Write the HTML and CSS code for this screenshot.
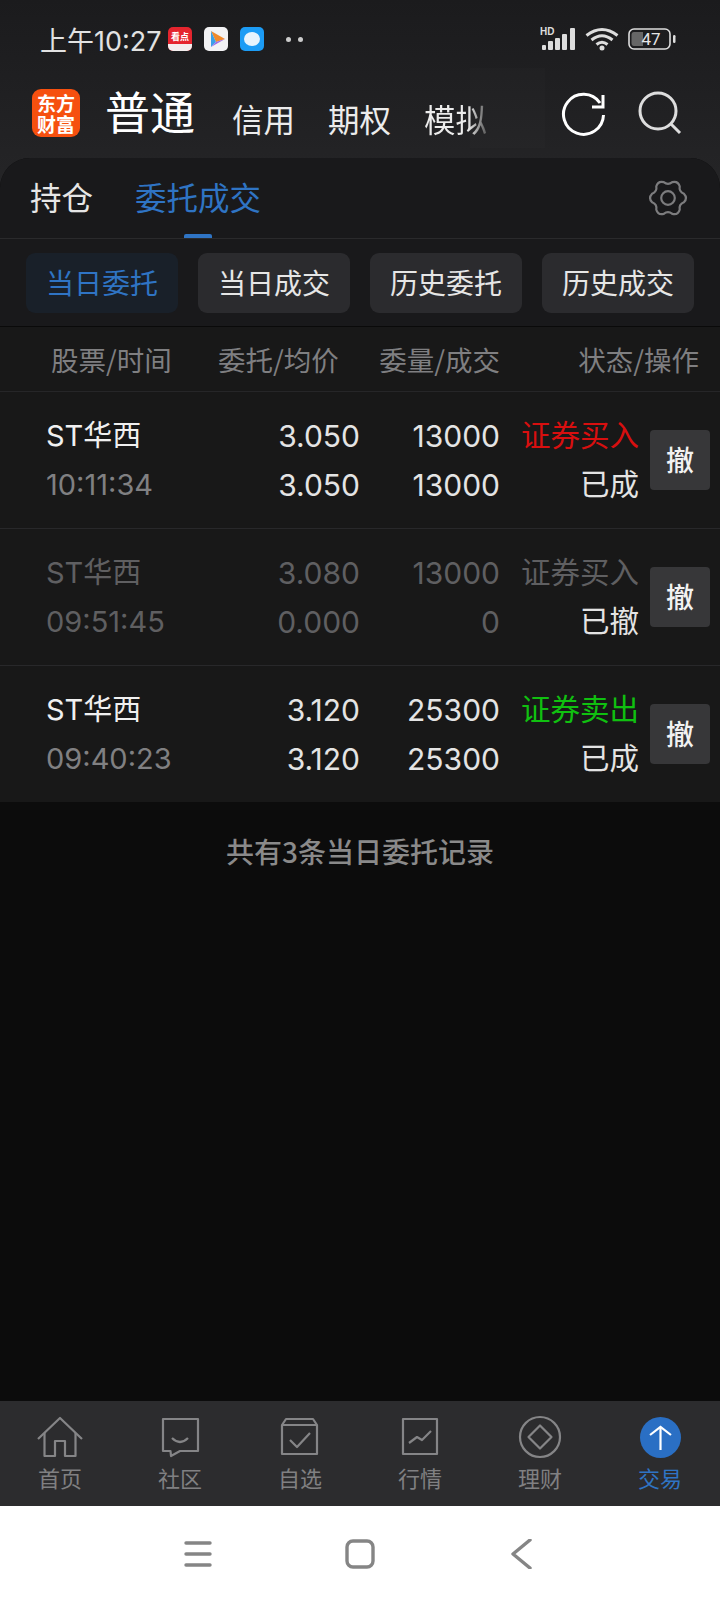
FILE: index.html
```html
<!DOCTYPE html>
<html lang="zh-CN">

<head>
    <meta charset="UTF-8">
    <meta name="viewport" content="width=device-width, initial-scale=1.0">
    <title>委托成交</title>
    <link rel="stylesheet" href="styles.css">
</head>

<body>
    <div class="top">
        <!-- 状态栏 -->
        <div class="status">
            <span class="clock">上午10:27</span>
            <span class="app app-red">看点<i></i></span>
            <span class="app app-white">
                <svg width="24" height="24" viewBox="0 0 24 24">
                    <path d="M7 4 L21 12 L12 15Z" fill="#f08a2c" />
                    <path d="M7 4 L7 20 L12 15Z" fill="#3aa0e8" />
                    <path d="M7 20 L21 12 L12 15Z" fill="#9a6be8" />
                </svg>
            </span>
            <span class="app app-blue"><i></i></span>
            <span class="dots"><i></i><i></i></span>
            <span class="status-right">
                <svg width="36" height="24" viewBox="0 0 36 24">
                    <text x="0" y="8" class="hd">HD</text>
                    <rect x="2" y="18" width="4" height="5" rx="1" fill="#ddd" />
                    <rect x="8" y="14" width="5" height="9" rx="1" fill="#ddd" />
                    <rect x="15" y="11" width="5" height="12" rx="1" fill="#ddd" />
                    <rect x="22" y="7" width="5" height="16" rx="1" fill="#ddd" />
                    <rect x="30" y="1" width="5" height="22" rx="1" fill="#ddd" />
                </svg>
                <svg width="34" height="24" viewBox="0 0 34 24" fill="none" stroke="#ddd" stroke-width="3">
                    <path d="M1.5 8.5 Q17 -3.5 32.5 8.5" />
                    <path d="M6.5 13 Q17 4.5 27.5 13" />
                    <path d="M11.5 17.5 Q17 13 22.5 17.5" />
                    <circle cx="17" cy="21" r="2.5" fill="#ddd" stroke="none" />
                </svg>
                <svg width="48" height="24" viewBox="0 0 48 24">
                    <rect x="1" y="2" width="41" height="20" rx="5" fill="none" stroke="#ddd" stroke-width="1.6" />
                    <path d="M6 5 H15 V19 H6 Q3.5 19 3.5 16 V8 Q3.5 5 6 5Z" fill="#666" />
                    <rect x="45" y="8" width="2.5" height="8" rx="1.2" fill="#ddd" />
                    <text x="23" y="18" class="batt">47</text>
                </svg>
            </span>
        </div>

        <!-- 账户类型 -->
        <div class="head">
            <div class="logo">
                <div>东方</div>
                <div>财富</div>
            </div>
            <span class="acc-main">普通</span>
            <span class="acc">信用</span>
            <span class="acc acc-2">期权</span>
            <span class="acc acc-3 acc-fade">模拟</span>
            <svg class="head-refresh" width="48" height="48" viewBox="0 0 48 48" fill="none" stroke="#fff" stroke-width="3">
                <path d="M40 15 A20 20 0 1 0 43.5 27" />
                <path d="M32 19 H43 V7" />
            </svg>
            <svg class="head-search" width="48" height="48" viewBox="0 0 48 48" fill="none" stroke="#ddd" stroke-width="3">
                <circle cx="21" cy="21" r="18" />
                <path d="M34 34 L43 43" />
            </svg>
        </div>
    </div>

    <div class="panel">
        <div class="tabs">
            <span class="tab">持仓</span>
            <span class="tab tab-on">委托成交</span>
            <svg class="gear" width="44" height="44" viewBox="-22 -22 44 44" fill="none" stroke="#7c7c7e" stroke-width="2.2">
                <path d="M15.9 -4.3 Q20 0 15.9 4.3 Q10.8 6.25 11.7 11.7 Q10 17.3 4.3 15.9 Q0 12.5 -4.3 15.9 Q-10 17.3 -11.7 11.7 Q-10.8 6.25 -15.9 4.3 Q-20 0 -15.9 -4.3 Q-10.8 -6.25 -11.7 -11.7 Q-10 -17.3 -4.3 -15.9 Q0 -12.5 4.3 -15.9 Q10 -17.3 11.7 -11.7 Q10.8 -6.25 15.9 -4.3Z" />
                <circle r="6.8" />
            </svg>
        </div>

        <div class="chips">
            <span class="chip chip-on">当日委托</span>
            <span class="chip">当日成交</span>
            <span class="chip">历史委托</span>
            <span class="chip">历史成交</span>
        </div>

        <div class="thead">
            <span class="th-name">股票/时间</span>
            <span>委托/均价</span>
            <span>委量/成交</span>
            <span class="th-state">状态/操作</span>
        </div>

        <div class="row">
            <span class="name">ST华西</span>
            <span class="num">3.050</span>
            <span class="num">13000</span>
            <span class="kind buy">证券买入</span>
            <span class="cancel">撤</span>
            <span class="time">10:11:34</span>
            <span class="num">3.050</span>
            <span class="num">13000</span>
            <span class="kind">已成</span>
        </div>
        <div class="row row-off">
            <span class="name">ST华西</span>
            <span class="num">3.080</span>
            <span class="num">13000</span>
            <span class="kind">证券买入</span>
            <span class="cancel">撤</span>
            <span class="time">09:51:45</span>
            <span class="num">0.000</span>
            <span class="num">0</span>
            <span class="kind kind-done">已撤</span>
        </div>
        <div class="row">
            <span class="name">ST华西</span>
            <span class="num">3.120</span>
            <span class="num">25300</span>
            <span class="kind sell">证券卖出</span>
            <span class="cancel">撤</span>
            <span class="time">09:40:23</span>
            <span class="num">3.120</span>
            <span class="num">25300</span>
            <span class="kind">已成</span>
        </div>

        <div class="total">共有3条当日委托记录</div>
    </div>

    <!-- 底部导航 -->
    <div class="tabbar">
        <div class="tb-item">
            <svg width="48" height="48" viewBox="0 0 48 48" fill="none" stroke="#858587" stroke-width="2.2" stroke-linejoin="round">
                <path d="M2 25 L24 4 L46 25" />
                <path d="M8.5 19 V42 H19 V27 H29 V42 H39.5 V19" />
            </svg>
            <span>首页</span>
        </div>
        <div class="tb-item">
            <svg width="48" height="48" viewBox="0 0 48 48" fill="none" stroke="#858587" stroke-width="2.2" stroke-linejoin="round">
                <path d="M7 5 H42 V37 H24 L15 42 L14.5 37 H7Z" />
                <path d="M16 24 Q24 32 32 24" />
            </svg>
            <span>社区</span>
        </div>
        <div class="tb-item">
            <svg width="48" height="48" viewBox="0 0 48 48" fill="none" stroke="#858587" stroke-width="2.2" stroke-linejoin="round">
                <path d="M6 11 L10 5 H37 L41 11 V40 H6Z" />
                <path d="M6 11 H41" />
                <path d="M14 26 L21 33 L34 19" />
            </svg>
            <span>自选</span>
        </div>
        <div class="tb-item">
            <svg width="48" height="48" viewBox="0 0 48 48" fill="none" stroke="#858587" stroke-width="2.2" stroke-linejoin="round">
                <rect x="7" y="5" width="34" height="35" />
                <path d="M13 29 L21 23 L26 26 L35 17" />
            </svg>
            <span>行情</span>
        </div>
        <div class="tb-item">
            <svg width="48" height="48" viewBox="0 0 48 48" fill="none" stroke="#858587" stroke-width="2.2" stroke-linejoin="round">
                <circle cx="24" cy="23" r="20" />
                <path d="M24 11.5 L35.5 23 L24 34.5 L12.5 23Z" />
            </svg>
            <span>理财</span>
        </div>
        <div class="tb-item tb-on">
            <svg width="48" height="48" viewBox="0 0 48 48" fill="none" stroke="#fff" stroke-width="2.2">
                <circle cx="24.5" cy="23.5" r="20.5" fill="#2a6fc4" stroke="none" />
                <path d="M24.5 36 V13" />
                <path d="M14 21 L24.5 13 L35 21" />
            </svg>
            <span>交易</span>
        </div>
    </div>

    <!-- 系统导航 -->
    <div class="sysnav">
        <svg width="30" height="30" viewBox="0 0 30 30" fill="none" stroke="#858585" stroke-width="3.4" stroke-linecap="round">
            <path d="M3 4 H27" />
            <path d="M3 15 H27" />
            <path d="M3 26 H27" />
        </svg>
        <svg width="30" height="30" viewBox="0 0 30 30" fill="none" stroke="#858585" stroke-width="3.4">
            <rect x="2" y="2" width="26" height="26" rx="6" />
        </svg>
        <svg width="30" height="30" viewBox="0 0 30 30" fill="none" stroke="#858585" stroke-width="3.4" stroke-linecap="round" stroke-linejoin="round">
            <path d="M23 1 L6 15 L23 29" />
        </svg>
    </div>
</body>

</html>
```

FILE: styles.css
```css
* {
    box-sizing: border-box;
}

html,
body {
    margin: 0;
    height: 100%;
}

body {
    width: 720px;
    height: 1600px;
    display: flex;
    flex-direction: column;
    overflow: hidden;
    background-color: #0c0c0c;
    font-family: "Noto Sans CJK SC", "Noto Sans", sans-serif;
    color: #e6e6e6;
}

.top {
    position: relative;
    height: 190px;
    margin-bottom: -32px;
    background: linear-gradient(#1b1b1d, #252527);
}

.status {
    height: 78px;
    padding-left: 40px;
    display: flex;
    align-items: center;
}

.clock {
    font-family: Inter, "Noto Sans CJK SC", sans-serif;
    font-size: 27px;
    color: #e2e2e2;
    width: 128px;
    white-space: nowrap;
}

.app {
    width: 24px;
    height: 24px;
    margin-right: 12px;
    border-radius: 5px;
    overflow: hidden;
    display: block;
}

.app-red {
    position: relative;
    background-color: #e5252e;
    color: #fff;
    font-size: 9px;
    font-weight: 700;
    line-height: 19px;
    text-align: center;
    white-space: nowrap;
}

.app-red i {
    position: absolute;
    left: 0;
    right: 0;
    bottom: 0;
    height: 7px;
    background-color: #f3eeee;
}

.app-white {
    background-color: #f2f2f4;
}

.app-blue {
    background-color: #1c9cf5;
    padding: 5px 4px;
}

.app-blue i {
    display: block;
    width: 16px;
    height: 14px;
    border-radius: 50%;
    background-color: #e8f4fd;
}

.dots {
    margin-left: 10px;
    display: flex;
    gap: 7px;
}

.dots i {
    width: 5px;
    height: 5px;
    border-radius: 50%;
    background-color: #ccc;
}

.status-right {
    margin-left: auto;
    margin-right: 44px;
    display: flex;
    align-items: center;
    gap: 9px;
}

.hd {
    font: 700 10px "Liberation Sans", sans-serif;
    fill: #ddd;
}

.batt {
    font: 400 17px Roboto, sans-serif;
    fill: #e6e6e6;
    text-anchor: middle;
}

.head {
    position: relative;
    height: 80px;
    padding-left: 32px;
    display: flex;
    align-items: flex-start;
}

.head::after {
    content: "";
    position: absolute;
    left: 470px;
    top: -10px;
    width: 75px;
    height: 80px;
    background-color: rgba(255, 255, 255, 0.012);
}

.logo {
    width: 48px;
    height: 48px;
    margin-top: 11px;
    border-radius: 9px;
    background-color: #f6500f;
    color: #fff;
    font-size: 19px;
    font-weight: 700;
    line-height: 21px;
    text-align: center;
    padding-top: 3px;
}

.acc-main {
    margin-left: 25px;
    font-size: 45px;
    line-height: 60px;
    margin-top: 3px;
    color: #fff;
}

.acc {
    margin-left: 37px;
    margin-top: 17px;
    font-size: 31.5px;
    line-height: 46px;
    color: #ececec;
    white-space: nowrap;
}

.acc-2,
.acc-3 {
    margin-left: 33px;
}

.acc-fade {
    background: linear-gradient(90deg, #ececec 70%, #555 100%);
    -webkit-background-clip: text;
    background-clip: text;
    color: transparent;
}

.head-refresh {
    position: absolute;
    left: 560px;
    top: 10px;
}

.head-search {
    position: absolute;
    left: 637px;
    top: 12px;
}

.panel {
    position: relative;
    flex: 1;
    background-color: #0c0c0c;
    border-radius: 30px 30px 0 0;
    overflow: hidden;
}

.tabs {
    position: relative;
    height: 81px;
    padding: 0 0 0 30px;
    display: flex;
    align-items: center;
    gap: 42px;
    background-color: #19191b;
    border-bottom: 1px solid #2a2a2c;
}

.tab {
    font-size: 31.5px;
    line-height: 40px;
    margin-top: -4px;
    color: #e6e6e6;
}

.tab-on {
    color: #2f74c4;
}

.tab-on::after {
    content: "";
    position: absolute;
    left: 184px;
    bottom: 0;
    width: 28px;
    height: 4px;
    border-radius: 2px 2px 0 0;
    background-color: #2f74c4;
}

.gear {
    position: absolute;
    left: 646px;
    top: 18px;
}

.chips {
    height: 88px;
    padding: 14px 26px 0;
    display: flex;
    gap: 20px;
    background-color: #19191b;
    border-bottom: 1px solid #0a0a0a;
}

.chip {
    width: 152px;
    height: 60px;
    border-radius: 9px;
    background-color: #2b2b2e;
    color: #e6e6e6;
    font-size: 28px;
    line-height: 58px;
    text-align: center;
}

.chip-on {
    background-color: #192029;
    color: #2f74c4;
}

.thead {
    height: 65px;
    padding-right: 21px;
    display: grid;
    grid-template-columns: 219px 121px 160px 199px;
    align-items: center;
    background-color: #181818;
    border-bottom: 1px solid #262628;
    color: #7f7f81;
    font-size: 27.5px;
    white-space: nowrap;
}

.thead span {
    text-align: right;
}

.thead .th-name {
    padding-left: 51px;
    text-align: left;
}

.thead span:nth-child(2) {
    grid-column: 2;
    text-align: left;
    margin-left: -1px;
}

.thead span:nth-child(3) {
    text-align: right;
}

.row {
    height: 137px;
    padding: 19px 10px 0 46px;
    display: grid;
    grid-template-columns: 194px 120px 140px 139px 71px;
    grid-template-rows: 49px 49px;
    align-items: center;
    background-color: #181818;
    border-bottom: 1px solid #28282a;
    font-size: 29px;
    white-space: nowrap;
}

.row:nth-of-type(6) {
    height: 136px;
    border-bottom: none;
}

.name {
    margin-bottom: 5px;
    color: #f0f0f0;
}

.time {
    grid-column: 1;
    font-family: Inter, sans-serif;
    font-size: 29px;
    color: #808082;
}

.name {
    font-family: Inter, "Noto Sans CJK SC", sans-serif;
    font-size: 29px;
}

.num {
    font-family: Inter, "Noto Sans CJK SC", sans-serif;
    font-size: 30px;
    text-align: right;
    color: #e4e4e4;
}

.kind {
    margin-bottom: 5px;
    text-align: right;
    color: #e4e4e4;
    font-size: 29.5px;
}

.buy {
    color: #d80f0f;
}

.sell {
    color: #10c010;
}

.cancel {
    grid-column: 5;
    grid-row: 1 / 3;
    justify-self: end;
    width: 60px;
    height: 60px;
    border-radius: 4px;
    background-color: #373739;
    color: #f2f2f2;
    font-size: 28px;
    font-weight: 500;
    line-height: 58px;
    text-align: center;
}

.row-off .name,
.row-off .time,
.row-off .num,
.row-off .kind {
    color: #5f5f61;
}

.row-off .kind-done {
    color: #e4e4e4;
}

.total {
    margin-top: 29px;
    text-align: center;
    color: #8a8a8a;
    font-size: 28px;
    font-weight: 500;
    line-height: 40px;
}

.tabbar {
    height: 105px;
    display: grid;
    grid-template-columns: repeat(6, 120px);
    background-color: #2c2c2e;
}

.tb-item {
    padding-top: 13px;
    display: flex;
    flex-direction: column;
    align-items: center;
    color: #808082;
    font-size: 22px;
    line-height: 30px;
}

.tb-on {
    color: #2f74c4;
}

.sysnav {
    height: 94px;
    padding-top: 2px;
    display: flex;
    justify-content: center;
    align-items: center;
    gap: 132px;
    background-color: #fff;
}
```
